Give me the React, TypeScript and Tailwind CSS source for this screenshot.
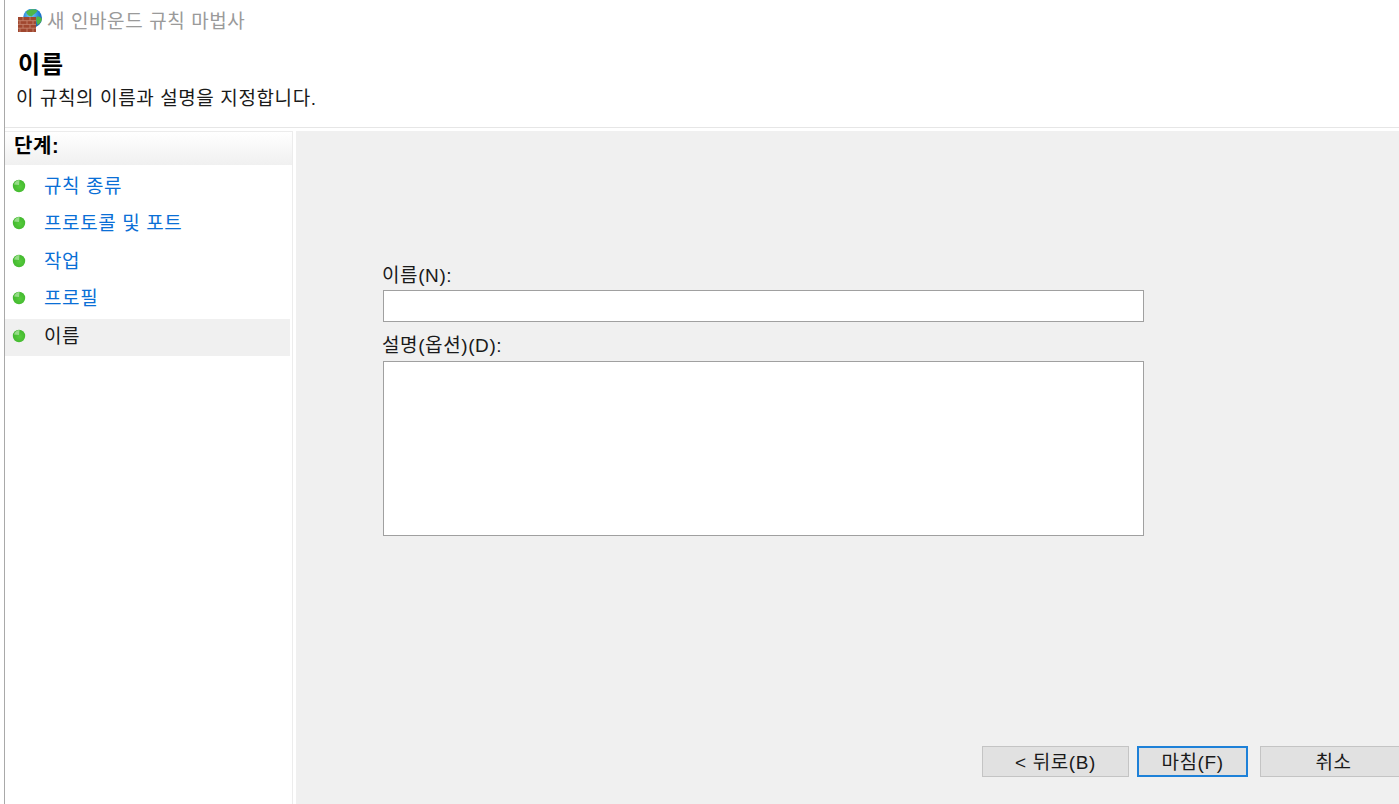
const steps = [
  { label: "규칙 종류", active: false },
  { label: "프로토콜 및 포트", active: false },
  { label: "작업", active: false },
  { label: "프로필", active: false },
  { label: "이름", active: true },
];

function WizardIcon() {
  return (
    <svg width="26" height="26" viewBox="0 0 26 26" className="block shrink-0">
      <defs>
        <radialGradient id="globe" cx="0.4" cy="0.35" r="0.75">
          <stop offset="0" stopColor="#7fd0f5" />
          <stop offset="0.6" stopColor="#1f7fd8" />
          <stop offset="1" stopColor="#16559e" />
        </radialGradient>
      </defs>
      <circle cx="16.5" cy="9" r="9.5" fill="url(#globe)" />
      <path d="M10 3 C13 0 18 -0.5 21.5 1.5 C20 5 17 5 16 7.5 C13.5 7.5 11 6 10 3 Z" fill="#4fb648" />
      <path d="M20.5 8 C22.5 7 25 8 26 10 C25.5 13 23.5 15 21.5 16 C20.5 13.5 19.5 10 20.5 8 Z" fill="#4fb648" />
      <rect x="2" y="8" width="18" height="15" fill="#a0472f" />
      <path
        d="M2 11.7H20M2 15.4H20M2 19.2H20M7 8V11.7M14 8V11.7M4 11.7V15.4M11 11.7V15.4M17 11.7V15.4M7 15.4V19.2M14 15.4V19.2M4 19.2V23M11 19.2V23M17 19.2V23"
        stroke="#c98a75"
        strokeWidth="0.8"
        fill="none"
      />
    </svg>
  );
}

function StepDot() {
  return (
    <svg width="14" height="14" viewBox="0 0 14 14" className="mb-[3px] block shrink-0">
      <defs>
        <radialGradient id="dot" cx="0.55" cy="0.55" r="0.6">
          <stop offset="0" stopColor="#58cc3e" />
          <stop offset="1" stopColor="#3fb62c" />
        </radialGradient>
      </defs>
      <circle cx="7" cy="7" r="6.2" fill="url(#dot)" />
      <path d="M2 5.5 C3 2.5 5 1.2 7.5 1 L7 6 Z" fill="#a9e29c" opacity="0.8" />
    </svg>
  );
}

function WizardButton({ label, className }: { label: string; className: string }) {
  return (
    <button
      type="button"
      className={`h-[31px] shrink-0 bg-[#e1e1e1] pt-[2px] text-[19px] leading-none tracking-[0.6px] text-[#1a1a1a] ${className}`}
    >
      {label}
    </button>
  );
}

export default function App() {
  return (
    <div className="flex h-[804px] w-[1399px] overflow-hidden bg-white pl-[4px] font-['Liberation_Sans','Noto_Sans_CJK_KR',sans-serif]">
      <div className="flex min-w-0 flex-1 flex-col border-l border-[#a9a9a9]">
        <header className="h-[128px] shrink-0 border-b border-[#e6e6e6] pl-[11px]">
          <div className="flex h-[42px] items-center gap-[5px] pt-[1px]">
            <WizardIcon />
            <span className="mt-[2px] text-[19px] tracking-[0.6px] text-[#9a9a9a]">새 인바운드 규칙 마법사</span>
          </div>
          <h1 className="mt-[7px] pl-[2px] text-[24px] leading-[32px] font-bold tracking-[1px] text-black">이름</h1>
          <p className="mt-[3px] text-[19px] leading-[30px] tracking-[0.6px] text-[#1a1a1a]">
            이 규칙의 이름과 설명을 지정합니다.
          </p>
        </header>

        <div className="mt-[3px] flex min-h-0 flex-1">
          <aside className="w-[288px] shrink-0 border-r border-t border-[#ececec] bg-white">
            <div className="h-[33px] bg-gradient-to-b from-white to-[#f0f0f0] pl-[9px] text-[20px] leading-[28px] font-bold tracking-[0.6px] text-black">
              단계:
            </div>
            <ul className="pt-[3.5px] pr-[2px]">
              {steps.map((s) => (
                <li
                  key={s.label}
                  className={`flex h-[37.5px] items-center gap-[18px] pl-[7px] text-[19px] tracking-[0.6px] ${
                    s.active ? "bg-[#f0f0f0] text-[#1a1a1a]" : "text-[#0a6fd6]"
                  }`}
                >
                  <StepDot />
                  <span className="-mt-[1px]">{s.label}</span>
                </li>
              ))}
            </ul>
          </aside>

          <main className="ml-[3px] flex min-w-0 flex-1 flex-col bg-[#f0f0f0] pl-[87px]">
            <div className="w-[761px] pt-[132px]">
              <label className="-ml-[1px] block text-[19px] leading-[26px] tracking-[0.6px] text-[#1a1a1a]">
                이름(N):
              </label>
              <input className="mt-[1px] block h-[32px] w-full border border-[#a0a0a0] bg-white" />
              <label className="-ml-[1px] mt-[11px] block text-[19px] leading-[26px] tracking-[0.6px] text-[#1a1a1a]">
                설명(옵션)(D):
              </label>
              <textarea className="mt-[2px] block h-[175px] w-full resize-none border border-[#a0a0a0] bg-white" />
            </div>
            <div className="mt-auto mb-[27px] ml-[599px] flex gap-[8px]">
              <WizardButton label="< 뒤로(B)" className="w-[147px] border border-[#c4c4c4]" />
              <WizardButton label="마침(F)" className="w-[111px] border-2 border-[#1e81d8]" />
              <WizardButton label="취소" className="ml-[4px] w-[147px] border border-[#c4c4c4]" />
            </div>
          </main>
        </div>
      </div>
    </div>
  );
}
